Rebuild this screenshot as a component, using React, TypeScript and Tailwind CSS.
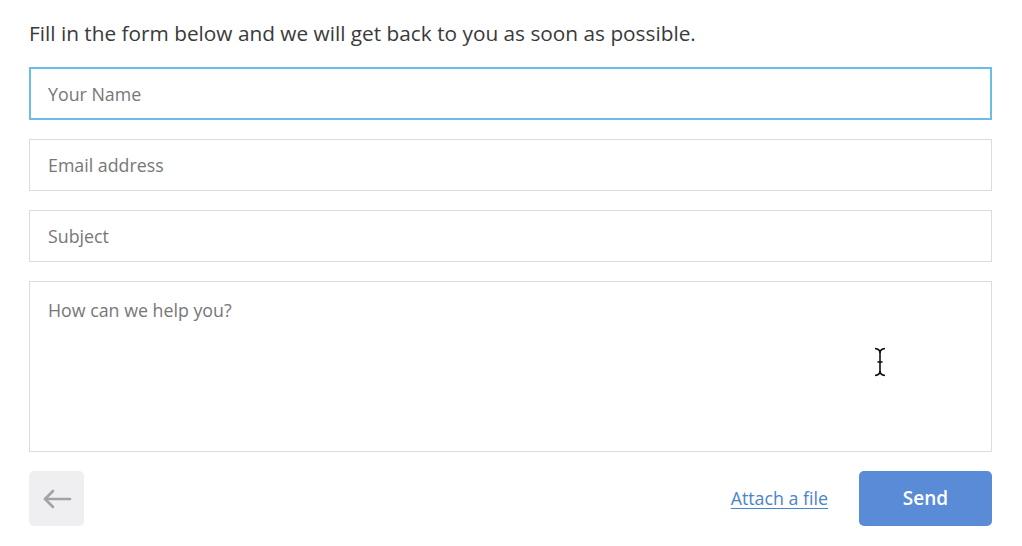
import React from 'react';

const field =
  "w-full h-[52px] border border-[#dcdcdc] bg-white px-[18px] text-[17.8px] text-[#555] placeholder:text-[#777] outline-none";

export default function App() {
  return (
    <div className="min-h-[546px] bg-white px-[29px] pt-[19px] text-[#333]" style={{ fontFamily: '"Open Sans", sans-serif' }}>
      <p className="text-[20.8px] leading-[29px] text-[#3a3a3a]">
        Fill in the form below and we will get back to you as soon as possible.
      </p>

      <div className="mt-[19px] w-[963px] flex flex-col gap-[19px]">
        <input
          className="w-full h-[53px] border-2 border-[#6bbde6] bg-white px-[17px] text-[17.8px] placeholder:text-[#777] outline-none"
          placeholder="Your Name"
        />
        <input className={field} placeholder="Email address" />
        <input className={field} placeholder="Subject" />
        <div className="relative">
          <textarea
            className="block w-full h-[171px] resize-none border border-[#dcdcdc] bg-white px-[18px] pt-[15px] text-[17.8px] placeholder:text-[#777] outline-none"
            placeholder="How can we help you?"
          />
          <svg className="absolute left-[844px] top-[66px]" width="14" height="30" viewBox="0 0 14 30" fill="none" stroke="#111" strokeWidth="1.6">
            <path d="M2 1.5 Q7 2 7 6 Q7 2 12 1.5" />
            <path d="M7 5 V25" />
            <path d="M4.5 15 H9.5" />
            <path d="M2 28.5 Q7 28 7 24 Q7 28 12 28.5" />
          </svg>
        </div>

        <div className="flex items-center">
          <button className="w-[55px] h-[55px] rounded-[5px] bg-[#efeef1] flex items-center justify-center">
            <svg width="30" height="20" viewBox="0 0 30 20" fill="none" stroke="#a3a3a6" strokeWidth="2.6" strokeLinecap="round" strokeLinejoin="round">
              <path d="M28 10 H3" />
              <path d="M11 2 L3 10 L11 18" />
            </svg>
          </button>
          <div className="flex-1" />
          <a href="#" className="text-[17.8px] text-[#4a84c9] underline underline-offset-[3px] mr-[31px]">
            Attach a file
          </a>
          <button className="w-[133px] h-[55px] rounded-[5px] bg-[#598bd7] text-white text-[19px] font-semibold">
            Send
          </button>
        </div>
      </div>
    </div>
  );
}
